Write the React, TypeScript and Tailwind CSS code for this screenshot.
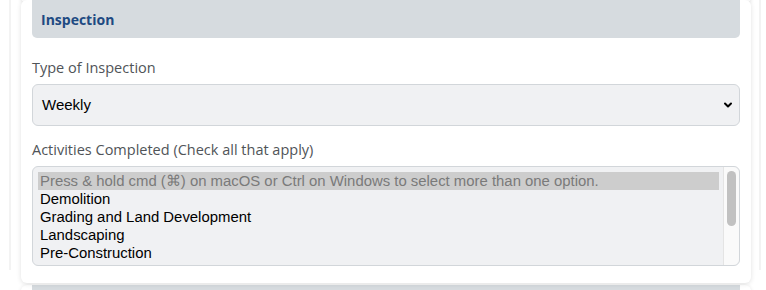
import { ChevronDown } from 'lucide-react';

const activities = [
  'Demolition',
  'Grading and Land Development',
  'Landscaping',
  'Pre-Construction',
];

export default function App() {
  return (
    <div className="h-[290px] w-[766px] overflow-hidden bg-white">
      <div className="ml-[9px] mr-[5px] h-full border-x-2 border-[#f3f3f3] pl-[10px] pr-[8px]">
        {/* bottom of previous card */}
        <div className="-mt-[20px] h-[23px] rounded-b-[6px] bg-white shadow-[0_1px_4px_rgba(0,0,0,0.12)]" />

        <div className="relative mt-[17px] rounded-[6px] bg-white px-[11px] pb-[17px] shadow-[0_1px_5px_rgba(0,0,0,0.12)]">
          <div className="relative z-10 -mt-[20px] flex h-[38px] items-end rounded-b-[5px] bg-[#d6dbdf] px-[9px] pb-[11px]">
            <span className="text-[14px] font-bold leading-none text-[#1e4a82] [font-family:'Open_Sans',sans-serif]">
              Inspection
            </span>
          </div>

          <div className="mt-[21px] text-[14.5px] leading-[18px] text-[#505458] [font-family:'Open_Sans',sans-serif]">
            Type of Inspection
          </div>
          <div className="mt-[7px] flex h-[42px] items-center justify-between rounded-[6px] border border-[#d2d6da] bg-[#f0f1f3] pl-[9px] pr-[5px]">
            <span className="text-[15px] text-black [font-family:'Liberation_Sans',sans-serif]">Weekly</span>
            <ChevronDown className="h-[12px] w-[12px] text-black" strokeWidth={4} />
          </div>

          <div className="mt-[15px] text-[14.5px] leading-[18px] text-[#505458] [font-family:'Open_Sans',sans-serif]">
            Activities Completed (Check all that apply)
          </div>
          <div className="mt-[7px] flex h-[100px] rounded-[6px] border border-[#d2d6da] bg-[#f0f1f3] pl-[5px] pt-[5px] text-[14.9px] leading-[18px] [font-family:'Liberation_Sans',sans-serif]">
            <div className="flex-1 overflow-hidden">
              <div className="whitespace-nowrap bg-[#cdcdcd] pl-[2px] text-[#7a7a7a]">
                Press &amp; hold cmd (⌘) on macOS or Ctrl on Windows to select more than one option.
              </div>
              {activities.map((a) => (
                <div key={a} className="pl-[2px] text-black">
                  {a}
                </div>
              ))}
            </div>
            <div className="-mt-[5px] ml-[4px] w-[16px] rounded-r-[6px] border-l border-[#e4e4e4] bg-[#fafafa] px-[3px] pt-[4px]">
              <div className="h-[55px] rounded-full bg-[#c1c1c1]" />
            </div>
          </div>
        </div>

        {/* top of next card */}
        <div className="mt-[2px] rounded-t-[6px] bg-white px-[11px] shadow-[0_1px_4px_rgba(0,0,0,0.12)]">
          <div className="h-[20px] bg-[#d6dbdf]" />
        </div>
      </div>
    </div>
  );
}
